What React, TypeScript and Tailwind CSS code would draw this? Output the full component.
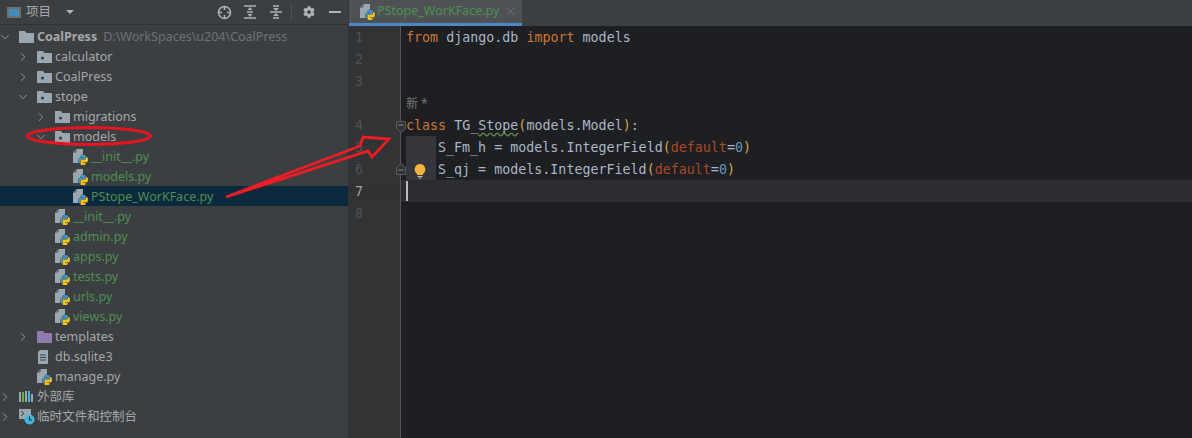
import { ChevronDown, ChevronRight } from "lucide-react";
import type { ReactNode } from "react";
import { FaCog } from "react-icons/fa";

const uiFont = "font-['Noto_Sans','Noto_Sans_CJK_SC',sans-serif]";
const monoFont = "font-['DejaVu_Sans_Mono',monospace]";

function Folder({ purple }: { purple?: boolean }) {
  const fill = purple ? "#8f7bb0" : "#9aa7b0";
  return (
    <svg width="15" height="12" viewBox="0 0 15 12" className="shrink-0">
      <path d="M0 0h6l1.5 2H15v10H0z" fill={fill} />
      {!purple && <circle cx="5.5" cy="7" r="1.6" fill="#3c3f41" />}
    </svg>
  );
}

function RootFolder() {
  return (
    <svg width="15" height="12" viewBox="0 0 15 12" className="shrink-0">
      <path d="M0 0h6l1.5 2H15v10H0z" fill="#9aa7b0" />
    </svg>
  );
}

const snake =
  "M5 10c0-2 1-2.500 2.500-2.500H10V7H7.500V6c0-1 1-1.500 2.500-1.500s2.500.5 2.500 1.500v3c0 1-.5 1.500-1.500 1.500H8.500c-1 0-1.500.5-1.500 1.500v1h-.5C5.500 13 5 12 5 10z";

function PyIcon() {
  return (
    <svg width="16" height="16" viewBox="0 0 16 16" className="shrink-0">
      <path d="M3.500 0H10v14H0V3.500z" fill="#9aa7b0" />
      <path d="M0 3h3V0" fill="none" stroke="#3c3f41" strokeWidth="0.8" />
      <g transform="translate(0.5 1.500)" stroke="#35383a" strokeWidth="1" paintOrder="stroke">
        <path d={snake} fill="#3d9bd4" />
        <path d={snake} fill="#f2c221" transform="rotate(180 9.750 9.750)" />
      </g>
    </svg>
  );
}

function FileIcon() {
  return (
    <svg width="12" height="14" viewBox="0 0 12 14" className="shrink-0">
      <path d="M3 0h8v14H1V2z" fill="#9aa7b0" />
      <path d="M3 5h6M3 7.500h6M3 10h6" stroke="#3c3f41" strokeWidth="1" />
    </svg>
  );
}

function LibraryIcon() {
  return (
    <svg width="15" height="12" viewBox="0 0 15 12" className="shrink-0">
      <rect x="0" y="1" width="2" height="10" fill="#9aa7b0" />
      <rect x="3" y="1" width="2" height="10" fill="#62b543" />
      <rect x="6" y="0" width="2" height="11" fill="#9aa7b0" />
      <rect x="9" y="0" width="2" height="11" fill="#40b6e0" />
      <rect x="12" y="3" width="2" height="8" fill="#9aa7b0" />
    </svg>
  );
}

function ScratchIcon() {
  return (
    <svg width="16" height="16" viewBox="0 0 16 16" className="shrink-0">
      <rect x="0" y="0" width="12" height="10" fill="#9aa7b0" />
      <path d="M2 2l3 2.500L2 7" stroke="#3c3f41" strokeWidth="1" fill="none" />
      <circle cx="10.500" cy="10.500" r="5" fill="#40b6e0" />
      <path d="M10.500 7.500v3.500h2.500" stroke="#23343d" strokeWidth="1.200" fill="none" />
    </svg>
  );
}

type RowProps = {
  depth: number;
  open?: boolean;
  icon: ReactNode;
  selected?: boolean;
  children: ReactNode;
};

function Row({ depth, open, icon, selected, children }: RowProps) {
  return (
    <div className={`flex h-5 items-center pt-[2px] ${selected ? "bg-[#0d293e]" : ""}`} style={{ paddingLeft: depth * 18 }}>
      <span className="flex w-[19px] shrink-0 items-center justify-start text-[#9da0a2]">
        {open === true && <ChevronDown size={14} strokeWidth={1.5} className="-ml-[2px]" />}
        {open === false && <ChevronRight size={14} strokeWidth={1.5} className="-ml-[2px]" />}
      </span>
      <span className="flex w-[18px] shrink-0 items-center">{icon}</span>
      {children}
    </div>
  );
}

const green = "text-[#4e8f52]";
const plain = "text-[#a6a8aa]";

function Project() {
  return (
    <aside className={`flex w-[348px] shrink-0 flex-col bg-[#3c3f41] text-[12.5px] ${uiFont}`}>
      <div className="flex h-[25px] items-center border-b border-[#323232] pl-[7px] pr-[7px]">
        <span className="h-[11px] w-[14px] border-2 border-[#6e6e6e] bg-[#3f8db8]" />
        <span className="ml-[5px] text-[#a6a8aa]">项目</span>
        <span className="ml-[15px] h-0 w-0 border-x-[4px] border-t-[4px] border-x-transparent border-t-[#afb1b3]" />
        <span className="ml-auto flex items-center text-[#afb1b3]">
          <svg width="15" height="15" viewBox="0 0 15 15" className="mr-[11px]">
            <circle cx="7.500" cy="7.500" r="6" fill="none" stroke="#afb1b3" strokeWidth="1.600" />
            <path d="M7.500 1v4M7.500 10v4M1 7.500h4M10 7.500h4" stroke="#afb1b3" strokeWidth="1.600" />
          </svg>
          <svg width="14" height="14" viewBox="0 0 14 14" className="mr-[12px]">
            <path d="M1 1h12M1 13h12M4 7h6" stroke="#afb1b3" strokeWidth="1.400" />
            <path d="M7 2l2.500 3h-5zM7 12l2.500-3h-5z" fill="#afb1b3" />
          </svg>
          <svg width="14" height="14" viewBox="0 0 14 14" className="mr-[8px]">
            <path d="M1 7h12M4 1h6M4 13h6" stroke="#afb1b3" strokeWidth="1.400" />
            <path d="M7 6l-3-3h6zM7 8l3 3H4z" fill="#afb1b3" />
          </svg>
          <span className="mr-[11px] h-[18px] w-px bg-[#515151]" />
          <FaCog size={12} className="mr-[14px]" />
          <span className="h-[2px] w-3 bg-[#afb1b3]" />
        </span>
      </div>
      <div className="flex flex-col pt-[1px]">
        <Row depth={0} open icon={<RootFolder />}>
          <span className="font-bold text-[#a6a8aa]">CoalPress</span>
          <span className="ml-[6px] text-[#6f7274]">D:\WorkSpaces\u204\CoalPress</span>
        </Row>
        <Row depth={1} open={false} icon={<Folder />}><span className={plain}>calculator</span></Row>
        <Row depth={1} open={false} icon={<Folder />}><span className={plain}>CoalPress</span></Row>
        <Row depth={1} open icon={<Folder />}><span className={plain}>stope</span></Row>
        <Row depth={2} open={false} icon={<Folder />}><span className={plain}>migrations</span></Row>
        <Row depth={2} open icon={<Folder />}><span className={plain}>models</span></Row>
        <Row depth={3} icon={<PyIcon />}><span className={green}>__init__.py</span></Row>
        <Row depth={3} icon={<PyIcon />}><span className={green}>models.py</span></Row>
        <Row depth={3} selected icon={<PyIcon />}><span className={green}>PStope_WorKFace.py</span></Row>
        <Row depth={2} icon={<PyIcon />}><span className={green}>__init__.py</span></Row>
        <Row depth={2} icon={<PyIcon />}><span className={green}>admin.py</span></Row>
        <Row depth={2} icon={<PyIcon />}><span className={green}>apps.py</span></Row>
        <Row depth={2} icon={<PyIcon />}><span className={green}>tests.py</span></Row>
        <Row depth={2} icon={<PyIcon />}><span className={green}>urls.py</span></Row>
        <Row depth={2} icon={<PyIcon />}><span className={green}>views.py</span></Row>
        <Row depth={1} open={false} icon={<Folder purple />}><span className={plain}>templates</span></Row>
        <Row depth={1} icon={<FileIcon />}><span className={plain}>db.sqlite3</span></Row>
        <Row depth={1} icon={<PyIcon />}><span className={plain}>manage.py</span></Row>
        <Row depth={0} open={false} icon={<LibraryIcon />}><span className={plain}>外部库</span></Row>
        <Row depth={0} open={false} icon={<ScratchIcon />}><span className={plain}>临时文件和控制台</span></Row>
      </div>
    </aside>
  );
}

const kw = "text-[#cc7832]";
const id = "text-[#a9b7c6]";
const bl = "text-[#6897bb]";
const param = "text-[#aa4926]";
const paren = "text-[#d5a84a]";

function Code() {
  return (
    <>
      <div className="h-[22px]">
        <span className={kw}>from</span><span className={id}> django.db </span><span className={kw}>import</span><span className={id}> models</span>
      </div>
      <div className="h-[22px]" />
      <div className="h-[22px]" />
      <div className={`flex h-[22px] items-center text-[12px] text-[#787878] ${uiFont}`}>新 *</div>
      <div className="h-[22px] whitespace-pre">
        <span className={kw}>class</span><span className={id}> TG_</span>
        <span className={`${id} underline decoration-wavy decoration-[#5a8a4a] underline-offset-2`}>Stope</span>
        <span className={paren}>(</span><span className={id}>models.Model</span><span className={paren}>)</span><span className={id}>:</span>
      </div>
      <div className="h-[22px] whitespace-pre pl-[32px]">
        <span className={id}>S_Fm_h = models.IntegerField</span><span className={paren}>(</span><span className={param}>default</span><span className={id}>=</span><span className={bl}>0</span><span className={paren}>)</span>
      </div>
      <div className="h-[22px] whitespace-pre pl-[32px]">
        <span className={id}>S_qj = models.IntegerField</span><span className={paren}>(</span><span className={param}>default</span><span className={id}>=</span><span className={bl}>0</span><span className={paren}>)</span>
      </div>
    </>
  );
}

function Editor() {
  const lines = ["1", "2", "3", "", "4", "5", "6", "7", "8"];
  return (
    <main className="flex min-w-0 flex-1 flex-col border-l border-[#323232]">
      <div className="flex h-[26px] bg-[#3c3f41]">
        <div className={`flex w-[173px] items-center border-b-[3px] border-[#4a88c7] bg-[#4e5254] pl-[11px] text-[12.5px] ${green} ${uiFont}`}>
          <PyIcon />
          <span className="ml-px">PStope_WorKFace.py</span>
          <svg width="9" height="9" viewBox="0 0 9 9" className="ml-[7px]">
            <path d="M1 1l7 7M8 1l-7 7" stroke="#6e7072" strokeWidth="1" />
          </svg>
        </div>
      </div>
      <div className={`relative flex min-h-0 flex-1 bg-[#1e1f22] text-[13.33px] leading-[23px] ${monoFont}`}>
        <div className="w-[52px] shrink-0 border-r border-[#555555] bg-[#313335] pl-[6px] text-[#4e5254]">
          {lines.map((n, i) => (
            <div key={i} className={`h-[22px] ${n === "7" ? "-ml-[6px] bg-[#323232] pl-[6px] text-[#a4a3a3]" : ""}`}>{n}</div>
          ))}
        </div>
        <div className="min-w-0 flex-1 pl-[5px]">
          <Code />
          <div className="-ml-[5px] h-[22px] bg-[#2b2d30]">
            <span className="ml-[5px] block h-[20px] w-[2px] translate-y-px bg-[#bbbbbb]" />
          </div>
        </div>
        {/* intention bulb column over the code */}
        <div className="absolute left-[57px] top-[110px] flex h-11 w-[30px] items-end justify-center bg-[#35363c] pb-px pr-[2px]">
          <svg width="12" height="15" viewBox="0 0 12 15">
            <path d="M6 0a5.500 5.500 0 0 1 3 10v1H3v-1A5.500 5.500 0 0 1 6 0z" fill="#f2b33d" />
            <path d="M3.500 12.500h5M4.500 14h3" stroke="#bbbbbb" strokeWidth="1" />
          </svg>
        </div>
        {/* fold markers */}
        <svg width="12" height="14" viewBox="0 0 12 14" className="absolute left-[46px] top-[94px]">
          <path d="M1.500 1.500h9v7L6 12.500 1.500 8.500z" fill="#313335" stroke="#5a5d5f" />
          <path d="M3.500 5h5" stroke="#8a8d8f" />
        </svg>
        <svg width="12" height="14" viewBox="0 0 12 14" className="absolute left-[46px] top-[136px]">
          <path d="M1.500 12.500v-7L6 1.500l4.500 4v7z" fill="#313335" stroke="#5a5d5f" />
          <path d="M3.500 8h5" stroke="#8a8d8f" />
        </svg>
      </div>
    </main>
  );
}

export default function App() {
  return (
    <div className="relative flex h-[438px] w-[1192px] overflow-hidden">
      <Project />
      <Editor />
      {/* hand-drawn red annotations on top of the screenshot */}
      <svg width="1192" height="438" viewBox="0 0 1192 438" className="pointer-events-none absolute left-0 top-0">
        <ellipse cx="89" cy="136" rx="61.500" ry="8.500" fill="none" stroke="#e8141f" strokeWidth="3" />
        <path d="M226 197L360 146l3-9 26 2-17 18-4-6z" fill="none" stroke="#ee1c25" strokeWidth="2.800" strokeLinejoin="miter" />
      </svg>
    </div>
  );
}
